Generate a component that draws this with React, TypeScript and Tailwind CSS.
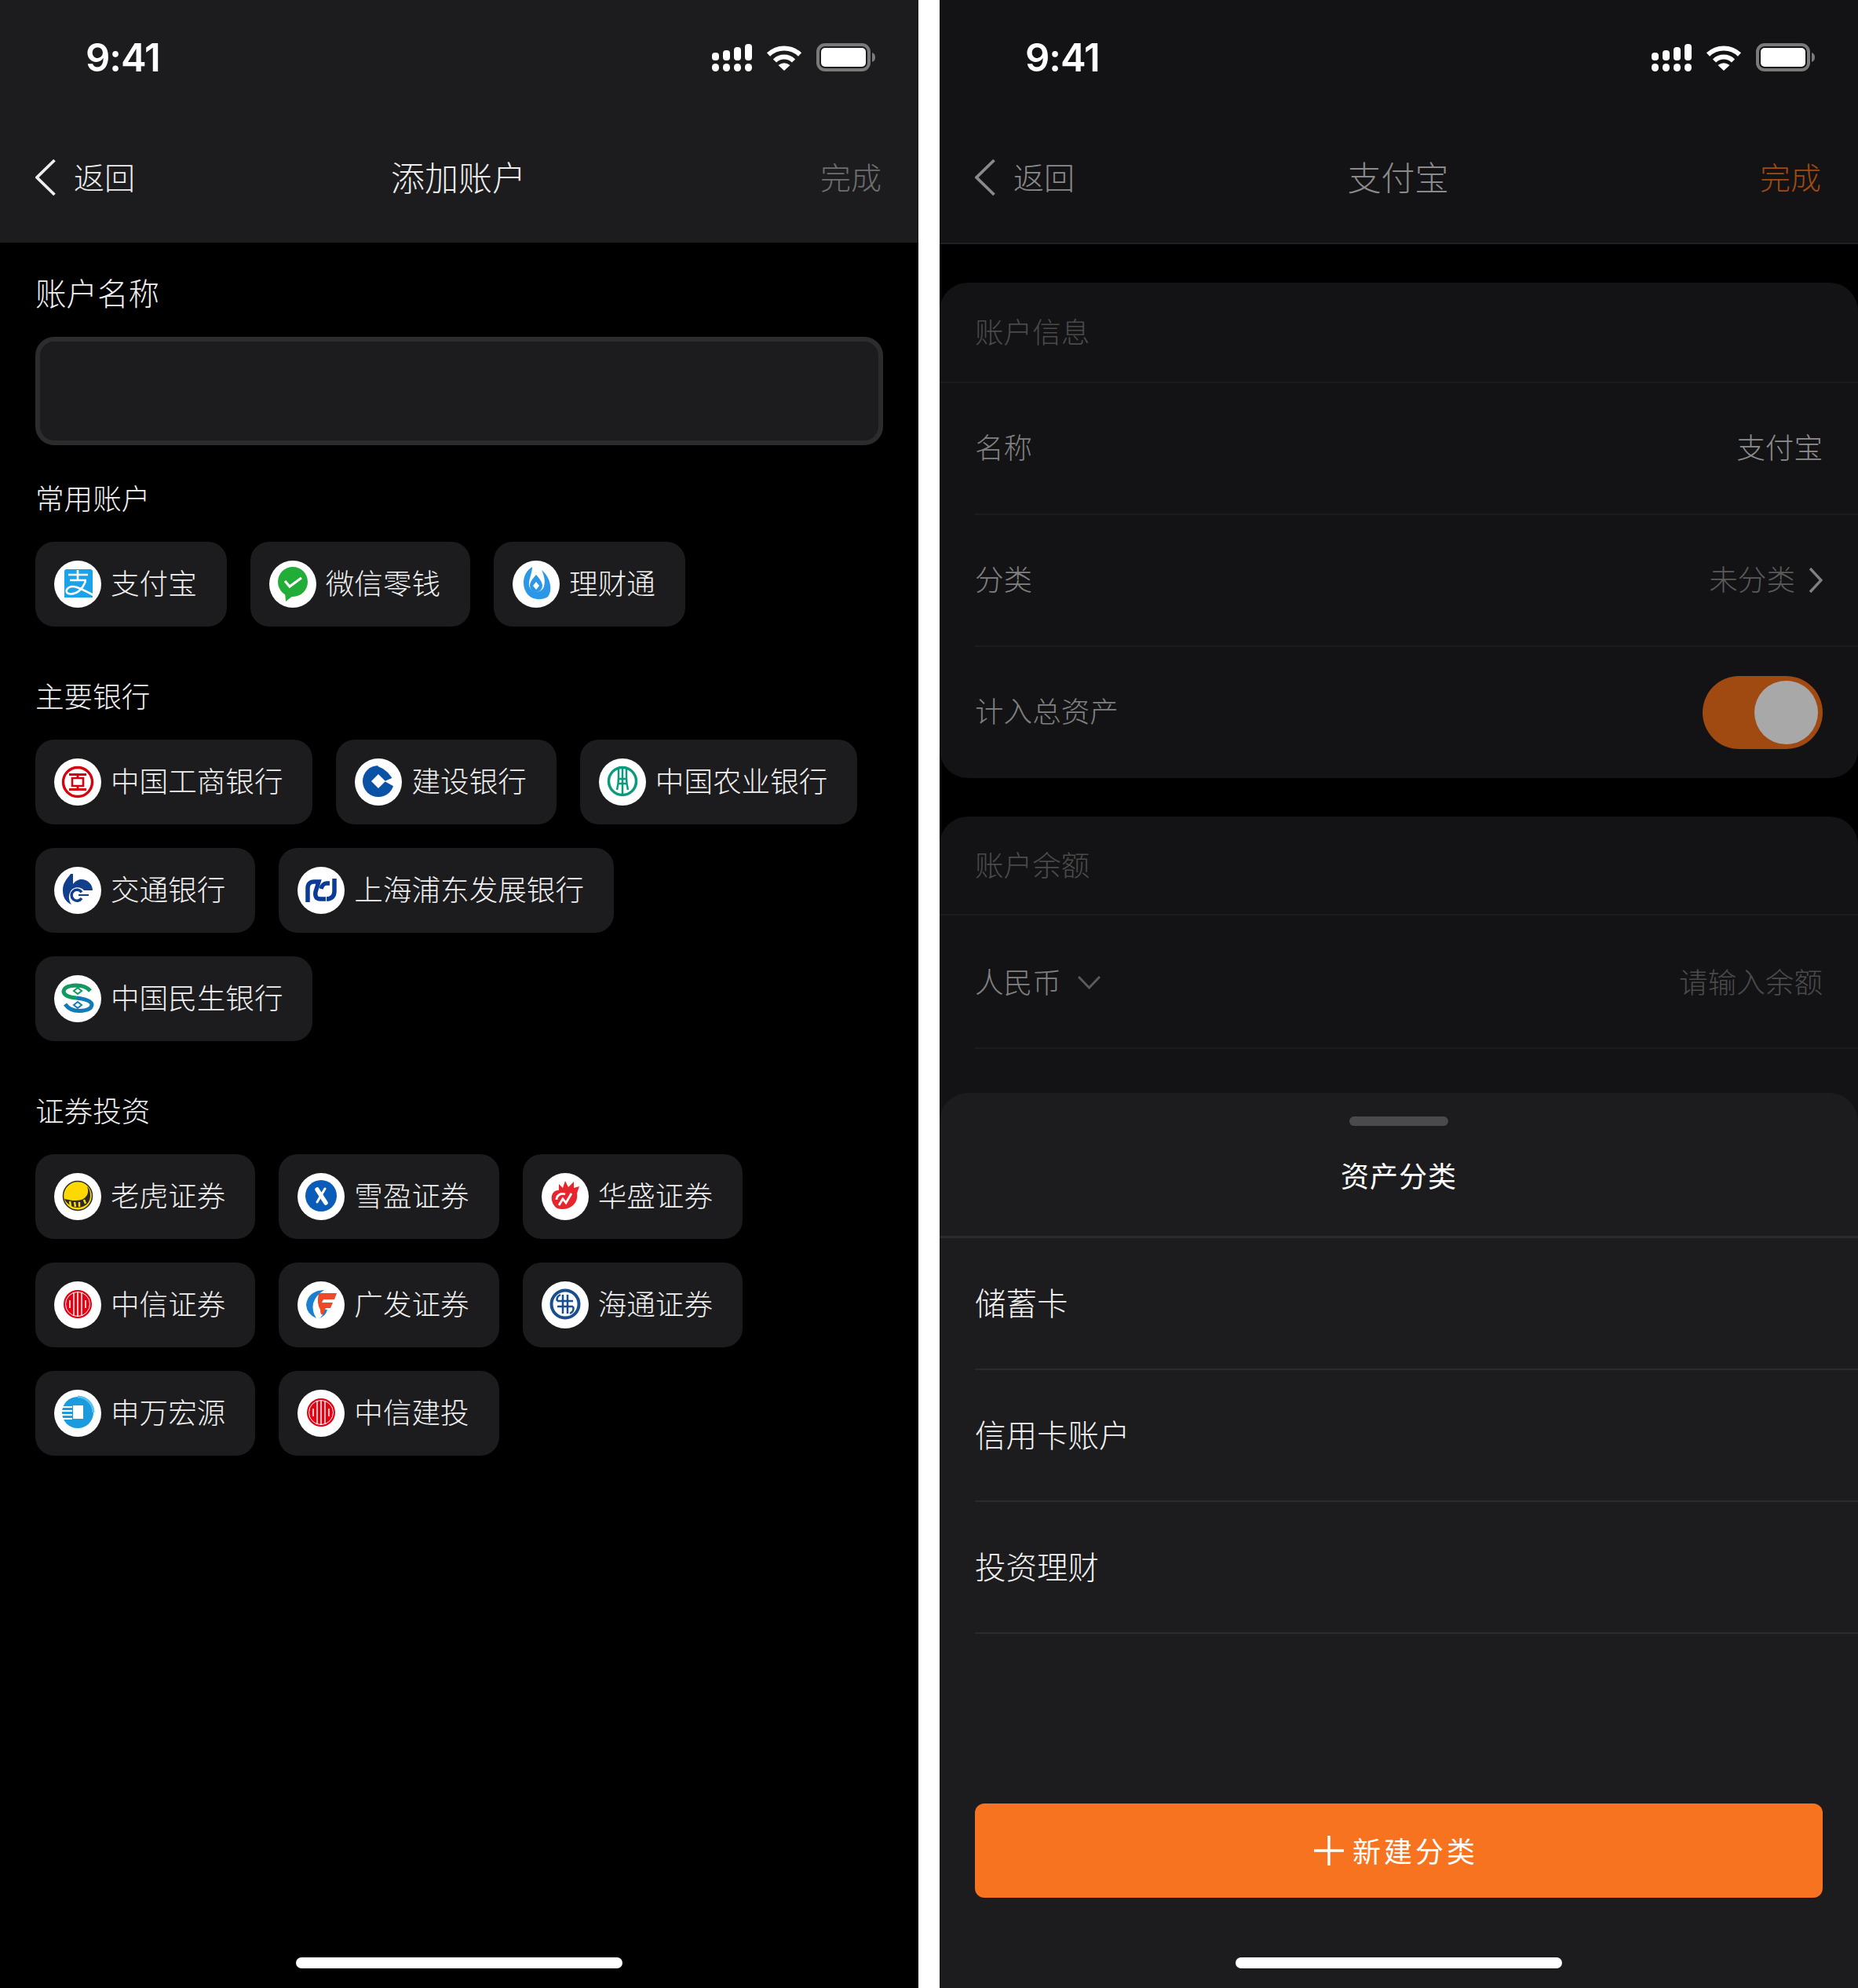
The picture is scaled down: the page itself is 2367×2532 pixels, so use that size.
import type { ReactNode } from "react";

const cjk = "[font-family:'Noto_Sans_CJK_SC','Inter',sans-serif]";

const StatusBar = () => (
  <div className="flex h-[146px] items-center justify-between pl-[109px] pr-[55px]">
    <span className="[font-family:'Inter',sans-serif] text-[49px] font-semibold leading-none tracking-[-1px] text-white">9:41</span>
    <div className="flex items-center gap-[18px]">
      <svg width="51" height="35" viewBox="0 0 51 35" fill="#fff">
        <rect x="0" y="11" width="9" height="10" rx="4" />
        <rect x="14" y="8" width="9" height="13" rx="4" />
        <rect x="28" y="4" width="9" height="17" rx="4" />
        <rect x="42" y="0" width="9" height="21" rx="4" />
        <rect x="0" y="25" width="9" height="10" rx="4.5" />
        <rect x="14" y="25" width="9" height="10" rx="4.5" />
        <rect x="28" y="25" width="9" height="10" rx="4.5" />
        <rect x="42" y="25" width="9" height="10" rx="4.5" />
      </svg>
      <svg width="46" height="33" viewBox="0 0 46 33" fill="none" stroke="#fff" strokeWidth="6">
        <path d="M3 12.5A29 29 0 0 1 43 12.5" />
        <path d="M11 20.5A17 17 0 0 1 35 20.5" />
        <path d="M15.5 26Q23 20.5 30.5 26L23 33Z" fill="#fff" stroke="none" />
      </svg>
      <svg width="75" height="36" viewBox="0 0 75 36" fill="none">
        <rect x="2" y="2" width="65" height="32" rx="9" stroke="#7a7a7a" strokeWidth="4" />
        <rect x="6" y="6" width="57" height="24" rx="5" fill="#fff" />
        <path d="M71 12c3 1 4 3 4 6s-1 5-4 6Z" fill="#7a7a7a" />
      </svg>
    </div>
  </div>
);

const NavBar = ({ title, done, chevron, back, titleColor }: { title: string; done: string; chevron: string; back: string; titleColor: string }) => (
  <div className={`grid h-[160px] grid-cols-3 items-center pl-[45px] pr-[47px] ${cjk} font-light`}>
    <div className="flex items-center gap-[23px]">
      <svg width="26" height="48" viewBox="0 0 26 48" fill="none" stroke={chevron} strokeWidth="3.8">
        <polyline points="24.5,2 2,24 24.5,46" />
      </svg>
      <span className={`pb-[4px] text-[39px] leading-none ${back}`}>返回</span>
    </div>
    <span className={`pb-[4px] text-center text-[43px] leading-none ${titleColor}`}>{title}</span>
    <span className={`pb-[4px] text-right text-[39px] leading-none ${done}`}>完成</span>
  </div>
);

const HomeBar = () => <div className="mb-[25px] mt-auto h-[14px] w-[416px] self-center rounded-full bg-white" />;

const Logo = ({ children }: { children: ReactNode }) => (
  <svg width="60" height="60" viewBox="0 0 60 60" className="shrink-0 rounded-full bg-white">
    {children}
  </svg>
);

const logos: Record<string, ReactNode> = {
  alipay: (
    <>
      <path d="M13 47v-33a3 3 0 0 1 3-3h30a3 3 0 0 1 3 3v33Z" fill="#1aa3e8" />
      <g fill="none" stroke="#fff" strokeWidth="2.6">
        <path d="M18 18h25M20 25h21M30 12v13" />
        <path d="M40 26Q34 42 21 42.500Q14 42 16 37Q20 31 29 34Q37 37 50 44" />
      </g>
    </>
  ),
  wechat: (
    <>
      <circle cx="30" cy="27" r="19" fill="#22ac38" />
      <path d="M20 40l1 12 9-7Z" fill="#22ac38" />
      <path d="M20 26l6 7 15-11" fill="none" stroke="#fff" strokeWidth="3.2" />
    </>
  ),
  licai: (
    <>
      <path d="M25 8C13 15 10 33 20 44c6 6 17 7 25 2 6-8 4-24-8-34 3 7 5 13 3 21-3 9-16 9-19-1-1-7 4-16 4-24Z" fill="#2b97e6" />
      <path d="M30 18c4 5 8 9 8 14a8 8 0 0 1-16 0c0-5 4-9 8-14Z" fill="#2b97e6" />
      <path d="M30 27l4 5-4 5-4-5Z" fill="#fff" />
    </>
  ),
  icbc: (
    <g fill="none" stroke="#d7000f">
      <circle cx="30" cy="30" r="18.500" strokeWidth="3.400" />
      <path d="M19 20.500H41M19 39.500H41M30 20.500V25M30 35V39.500" strokeWidth="2.800" />
      <path d="M23 25H37V35H23Z" strokeWidth="2.600" />
    </g>
  ),
  ccb: (
    <>
      <circle cx="30" cy="29" r="20" fill="#0a52a5" />
      <path d="M30 8Q45 13 53 31" fill="none" stroke="#fff" strokeWidth="4" />
      <path d="M38 29L54 22V38Z" fill="#fff" />
      <path d="M30 20l9 9-9 9-9-9Z" fill="#fff" />
    </>
  ),
  abc: (
    <g fill="none" stroke="#0a9a7c">
      <circle cx="30" cy="29" r="17.500" strokeWidth="3.500" />
      <path d="M25 12V24Q25 32 23 40M35 12V24Q35 32 37 40M30 10V48" strokeWidth="2.500" />
      <path d="M24 26H36M24 32H36" strokeWidth="2.500" />
    </g>
  ),
  bocom: (
    <>
      <path d="M21 9C16 16 11 20 11 30C11 39 15 45 22 48C18 42 18 36 21 31C25 25 33 25 38 30H49C49 21 41 15 33 16C29 17 26 19 24 22V9Z" fill="#123f8c" />
      <path d="M35 32.500A7 7 0 1 0 35 40" fill="none" stroke="#123f8c" strokeWidth="3.500" />
      <path d="M31 36H44" stroke="#123f8c" strokeWidth="2" />
    </>
  ),
  spdb: (
    <g fill="none" stroke="#0b3a97" strokeWidth="5.500">
      <path d="M13 45V27c0-5 3-8 8-8h6l-4 13c-1 6 1 9 6 9h7" />
      <path d="M47 15V31c0 7-4 10-10 10" />
      <path d="M41 21h-4c-3 0-6 3-7 7" />
    </g>
  ),
  cmbc: (
    <>
      <g fill="none" strokeWidth="5">
        <path d="M46 20Q40 13 28 13Q12 13.500 12 21.500Q14 28 28 29" stroke="#0f9a60" />
        <path d="M14 37Q20 45.500 32 45.500Q48 45 48 37Q46 31 28 29" stroke="#137bb5" />
      </g>
      <path d="M30 16l5 4-5 4-5-4Z" fill="none" stroke="#0f9a60" strokeWidth="2" />
      <path d="M30 34l5 4-5 4-5-4Z" fill="none" stroke="#137bb5" strokeWidth="2" />
    </>
  ),
  tiger: (
    <>
      <circle cx="30" cy="29" r="18.500" fill="#ffd800" stroke="#2a2a2a" strokeWidth="1.500" />
      <path d="M42 17c3 8 0 14-7 17-7 2-14 1-22-1 3 6 9 11 17 11 9 0 16-6 16-15 0-5-1-9-4-12Z" fill="#2a2a2a" />
      <path d="M20 36l1 6M26 37l1 6M32 37l0 6M38 34l2 5" stroke="#ffd800" strokeWidth="2.500" />
    </>
  ),
  xueying: (
    <>
      <circle cx="30" cy="29" r="20" fill="#0a5cb8" />
      <path d="M25 21L36 38" stroke="#fff" strokeWidth="5.500" strokeLinecap="round" />
      <path d="M35 20L25 37" stroke="#fff" strokeWidth="3" strokeLinecap="round" />
    </>
  ),
  huasheng: (
    <>
      <path d="M14 38c-4-10 2-17 8-16l0-8 5 5 3-9 4 8 7-7v8l7-2-3 9c2 11-7 21-20 20-5 0-9-3-11-8Z" fill="#e8252d" />
      <path d="M19 34c0-6 6-9 11-7M22 41l5-8 4 5 7-12" fill="none" stroke="#fff" strokeWidth="2.800" />
    </>
  ),
  citic: (
    <>
      <circle cx="30" cy="29" r="18" fill="#e60012" />
      <circle cx="30" cy="29" r="15.500" fill="none" stroke="#fff" strokeWidth="1" />
      <path d="M25 15V43M30 13V45M35 15V43M20 24V34M40 24V34" stroke="#fff" strokeWidth="1.500" />
    </>
  ),
  gf: (
    <>
      <path d="M34 11Q13 12 11 30Q12 42 24 47Q18 38 20 28Q23 18 34 11Z" fill="#1a7fd1" />
      <path d="M38 36Q36 45 26 47.500Q34 45 33 36Z" fill="#1a7fd1" />
      <path d="M27 15H50L47 23H33L31 27H45L42 34H36L33 42Q29 44 29 36Q24 28 27 15Z" fill="#ee4a26" />
    </>
  ),
  haitong: (
    <g fill="none" stroke="#1a4f8f">
      <circle cx="30" cy="29" r="17.500" strokeWidth="4" />
      <path d="M20 25H40M20 32H40M27 17V41M33 17V41" strokeWidth="2.500" />
      <path d="M20 25Q18 20 24 17M40 32Q42 38 36 41" strokeWidth="2.500" />
    </g>
  ),
  shenwan: (
    <>
      <circle cx="30" cy="29" r="20" fill="#1b9ade" />
      <path d="M30 9A20 20 0 0 1 50 29" fill="none" stroke="#5cc3f0" strokeWidth="3" />
      <rect x="24" y="20" width="13" height="17" fill="#fff" />
      <path d="M9 22H23M9 27H23M9 32H23M9 37H23" stroke="#fff" strokeWidth="2" />
    </>
  ),
};

const Chip = ({ logo, name }: { logo: string; name: string }) => (
  <div className="flex h-[108px] items-center gap-3 rounded-[24px] bg-[#1c1c1e] pl-6 pr-[38px]">
    <Logo>{logos[logo]}</Logo>
    <span className="whitespace-nowrap pb-[3px] text-[36.6px] font-light leading-none text-[#f0f0f0]">{name}</span>
  </div>
);

const Group = ({ title, items, className }: { title: string; items: [string, string][]; className: string }) => (
  <div className={className}>
    <div className="mb-[27px] flex h-[54px] items-center pb-[3px] text-[36.6px] font-light leading-none text-[#f0f0f0]">{title}</div>
    <div className="flex flex-wrap gap-[30px]">
      {items.map(([logo, name]) => (
        <Chip key={name} logo={logo} name={name} />
      ))}
    </div>
  </div>
);

const Row = ({ label, children, h = "h-[168px]" }: { label: ReactNode; children: ReactNode; h?: string }) => (
  <div className={`ml-[45px] flex items-center justify-between border-b-2 border-[#1c1c1e] pr-[45px] ${h}`}>
    {label}
    {children}
  </div>
);

const labelText = "pb-[3px] text-[36.6px] font-light leading-none text-[#808080]";

const CardTitle = ({ title, h }: { title: string; h: string }) => (
  <div className={`flex items-center border-b-2 border-[#1c1c1e] pb-[2px] pl-[45px] text-[36.6px] font-light leading-none text-[#4a4a4a] ${h}`}>{title}</div>
);

export default function App() {
  return (
    <div className={`flex h-[2532px] w-[2367px] overflow-hidden bg-white ${cjk}`}>
      {/* 添加账户 */}
      <div className="flex h-full w-[1170px] flex-col bg-black">
        <div className="h-[309px] bg-[#1c1c1e]">
          <StatusBar />
          <NavBar title="添加账户" done="text-[#6e6e6e]" chevron="#eeeeee" back="text-[#eeeeee]" titleColor="text-[#eeeeee]" />
        </div>
        <div className="px-[45px] pt-[36px]">
          <div className="flex h-[60px] items-center pb-[6px] text-[39.5px] font-light leading-none text-[#f0f0f0]">账户名称</div>
          <div className="mt-6 h-[138px] rounded-[24px] border-[6px] border-[#2c2c2e] bg-[#1c1c1e]" />
          <Group
            title="常用账户"
            className="mt-[42px]"
            items={[
              ["alipay", "支付宝"],
              ["wechat", "微信零钱"],
              ["licai", "理财通"],
            ]}
          />
          <Group
            title="主要银行"
            className="mt-[63px]"
            items={[
              ["icbc", "中国工商银行"],
              ["ccb", "建设银行"],
              ["abc", "中国农业银行"],
              ["bocom", "交通银行"],
              ["spdb", "上海浦东发展银行"],
              ["cmbc", "中国民生银行"],
            ]}
          />
          <Group
            title="证券投资"
            className="mt-[63px]"
            items={[
              ["tiger", "老虎证券"],
              ["xueying", "雪盈证券"],
              ["huasheng", "华盛证券"],
              ["citic", "中信证券"],
              ["gf", "广发证券"],
              ["haitong", "海通证券"],
              ["shenwan", "申万宏源"],
              ["citic", "中信建投"],
            ]}
          />
        </div>
        <HomeBar />
      </div>

      <div className="w-[27px] shrink-0 bg-white" />

      {/* 支付宝 */}
      <div className="relative h-full w-[1170px] overflow-hidden bg-black">
        <div className="h-[311px] border-b-2 border-[#1f1f21] bg-[#131315]">
          <StatusBar />
          <NavBar title="支付宝" done="text-[#a04a12]" chevron="#8a8a8a" back="text-[#8a8a8a]" titleColor="text-[#8a8a8a]" />
        </div>

        <div className="mt-[49px] rounded-[36px] bg-[#131315]">
          <CardTitle title="账户信息" h="h-[128px]" />
          <Row label={<span className={labelText}>名称</span>}>
            <span className="pb-[3px] text-[36.6px] font-light leading-none text-[#8c8c8c]">支付宝</span>
          </Row>
          <Row label={<span className={labelText}>分类</span>}>
            <div className="flex items-center gap-[17px]">
              <span className="pb-[3px] text-[36.6px] font-light leading-none text-[#5a5a5a]">未分类</span>
              <svg width="18" height="32" viewBox="0 0 18 32" fill="none" stroke="#808080" strokeWidth="3.4">
                <polyline points="2,1 16,16 2,31" />
              </svg>
            </div>
          </Row>
          <div className="flex h-[167px] items-center justify-between pl-[45px] pr-[45px]">
            <span className="pb-[4px] text-[36.6px] font-light leading-none text-[#808080]">计入总资产</span>
            <div className="flex h-[93px] w-[153px] items-center justify-end rounded-full bg-[#a04a12] pr-[6px]">
              <div className="h-[81px] w-[81px] rounded-full bg-[#a8a8a8]" />
            </div>
          </div>
        </div>

        <div className="mt-[49px] rounded-t-[36px] bg-[#131315]">
          <CardTitle title="账户余额" h="h-[126px]" />
          <Row
            h="h-[170px]"
            label={
              <div className="flex items-center gap-[21px]">
                <span className="text-[36.6px] font-light leading-none text-[#808080]">人民币</span>
                <svg width="29" height="17" viewBox="0 0 29 17" fill="none" stroke="#5a5a5a" strokeWidth="3" className="mt-[3px]">
                  <polyline points="1,1 14.5,15 28,1" />
                </svg>
              </div>
            }
          >
            <span className="pt-[1px] text-[36.6px] font-light leading-none text-[#4a4a4a]">请输入余额</span>
          </Row>
          <div className="h-[168px]" />
        </div>

        {/* bottom sheet */}
        <div className="absolute inset-x-0 bottom-0 top-[1392px] flex flex-col rounded-t-[36px] bg-[#1c1c1e]">
          <div className="mt-[30px] h-3 w-[126px] self-center rounded-full bg-[#4a4a4c]" />
          <div className="mt-[32px] flex h-[60px] items-center justify-center text-[36px] font-normal leading-none tracking-[1px] text-white">资产分类</div>
          <div className="mt-[48px] border-b-[3px] border-[#2a2a2c]" />
          {["储蓄卡", "信用卡账户", "投资理财"].map((label) => (
            <div key={label} className="ml-[45px] flex h-[168px] items-center border-b-2 border-[#2a2a2c] pb-[4px] text-[39.5px] font-light leading-none text-[#f2f2f2]">
              {label}
            </div>
          ))}
          <div className="mx-[45px] mt-[216px] flex h-[120px] items-center justify-center gap-[11px] rounded-[12px] bg-[#f7731f] pr-[7px]">
            <svg width="38" height="38" viewBox="0 0 38 38" stroke="#fff" strokeWidth="3.500">
              <path d="M0 19H38M19 0V38" />
            </svg>
            <span className="pb-[2px] text-[36px] font-normal leading-none tracking-[4px] text-white">新建分类</span>
          </div>
          <HomeBar />
        </div>
      </div>
    </div>
  );
}
